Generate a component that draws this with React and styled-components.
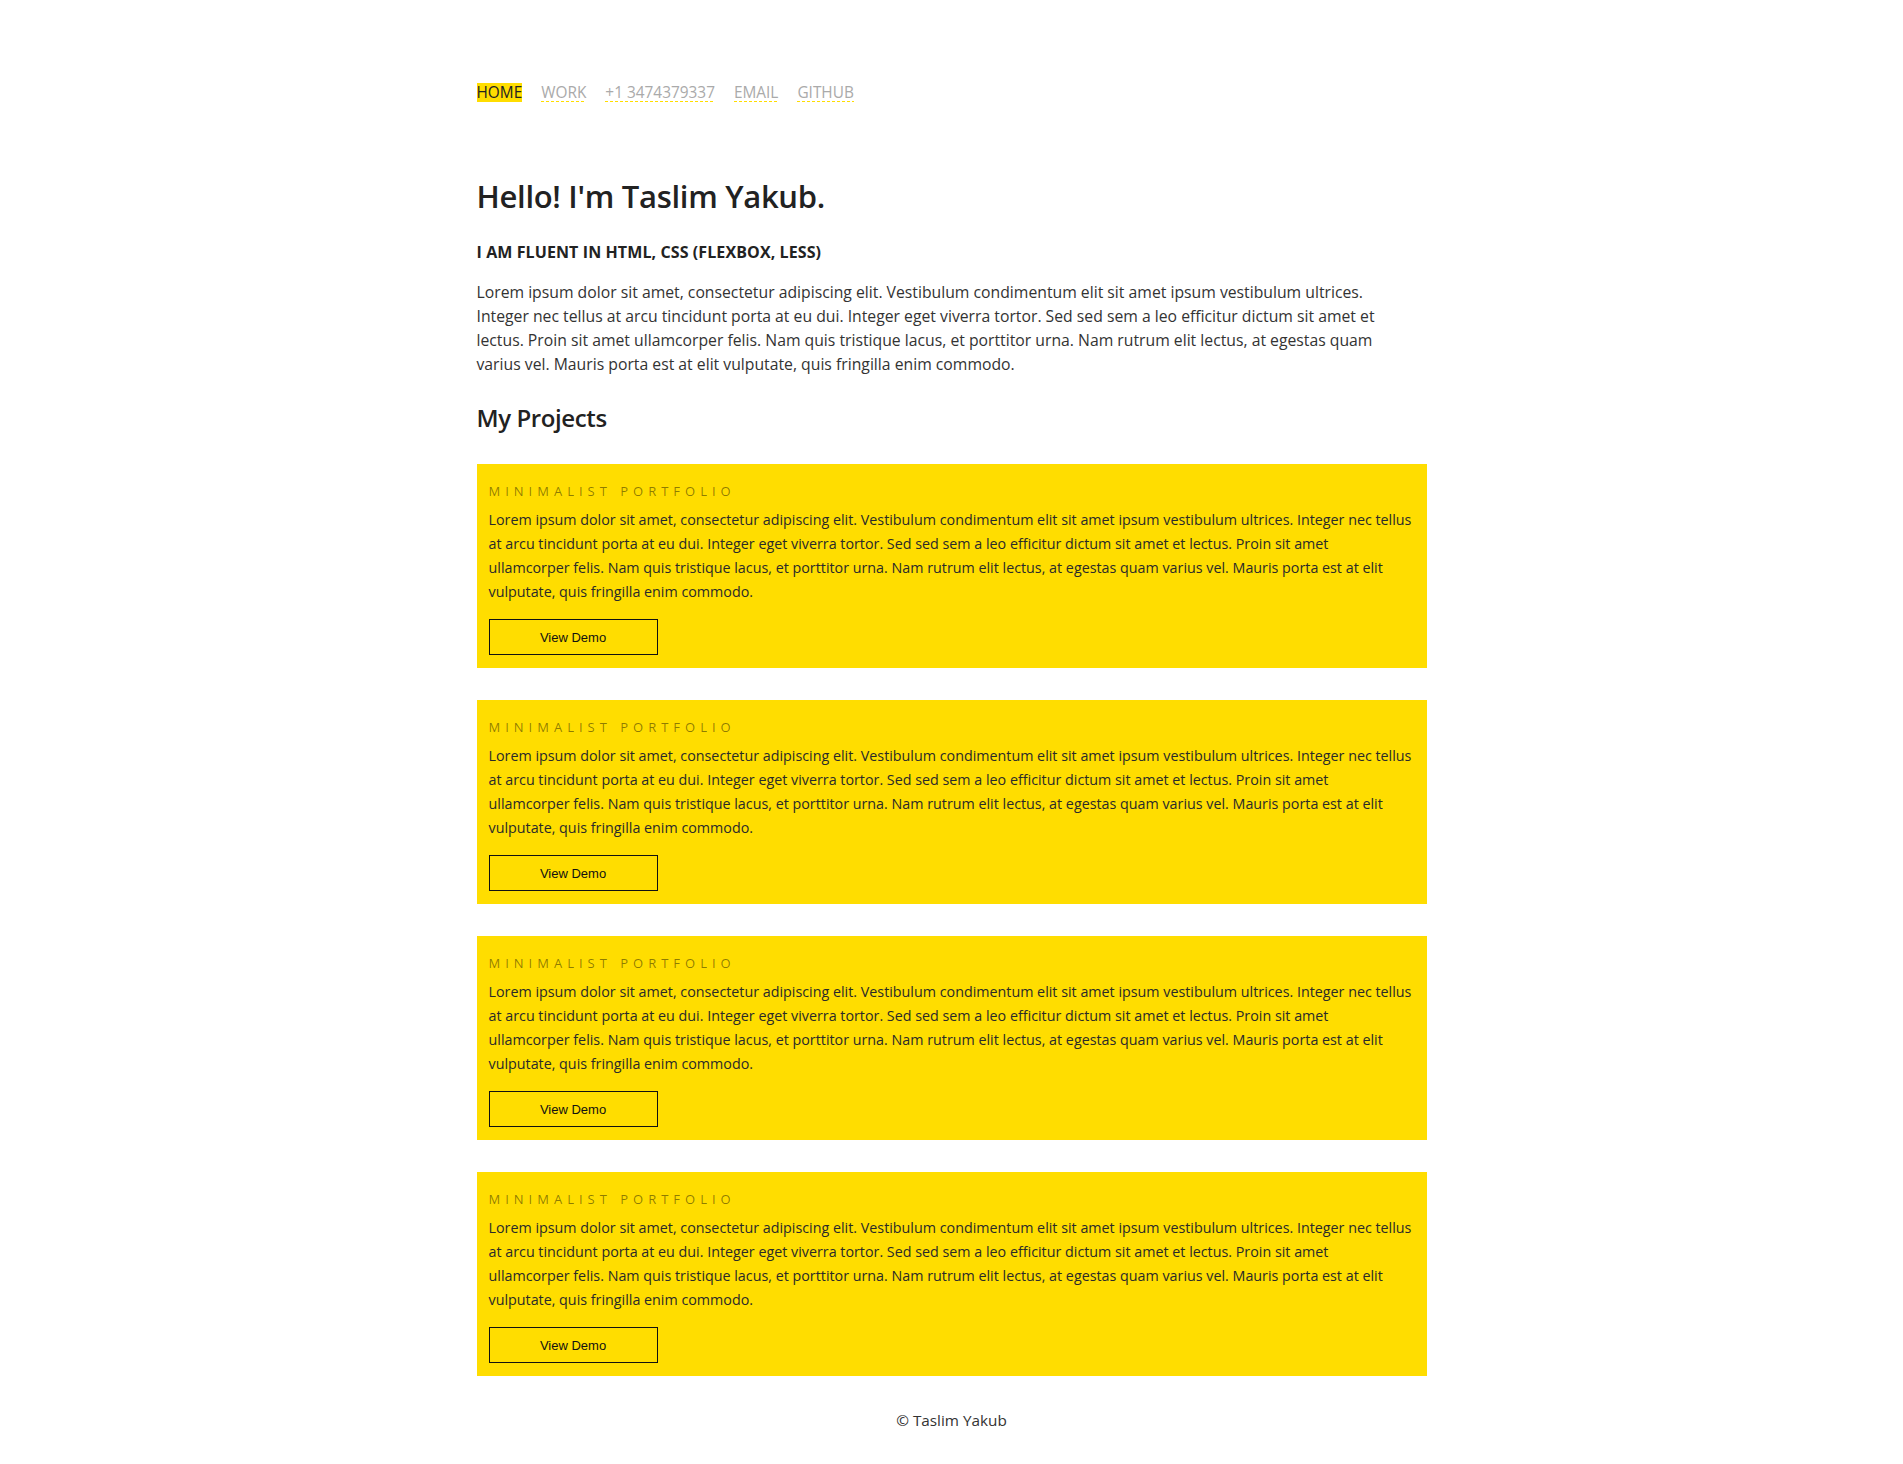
import React from 'react'
import styled, { createGlobalStyle } from 'styled-components'

const GlobalStyle = createGlobalStyle`
  body {
    margin: 0;
    background: #fff;
    font-family: "Open Sans", "Noto Sans", sans-serif;
    color: #333;
  }
`

const Page = styled.div`
  width: 950px;
  margin: 0 auto;
  padding: 83px 0 32px;
`

const Nav = styled.nav`
  display: flex;
  gap: 19px;
`

const NavLink = styled.a`
  display: inline-block;
  height: 19px;
  line-height: 19px;
  font-size: 15.4px;
  text-decoration: none;
  color: ${(p) => (p.$active ? '#222' : '#aaa')};
  background: ${(p) =>
    p.$active
      ? '#ffdd00'
      : 'repeating-linear-gradient(to right, #ffdd00 0 3px, transparent 3px 5px) left bottom / 100% 1px no-repeat'};
`

const Title = styled.h1`
  margin: 75.5px 0 0;
  font-size: 31px;
  line-height: 36px;
  font-weight: 600;
  letter-spacing: -0.3px;
  color: #222;
`

const Subtitle = styled.h4`
  margin: 28.8px 0 0;
  font-size: 16px;
  line-height: 20px;
  font-weight: 700;
  letter-spacing: 0.1px;
  color: #222;
`

const Intro = styled.p`
  max-width: 930px;
  margin: 17.4px 0 0;
  font-size: 15.75px;
  line-height: 24px;
  color: #333;
`

const SectionTitle = styled.h2`
  margin: 27.4px 0 0;
  font-size: 24px;
  line-height: 30px;
  font-weight: 600;
  letter-spacing: -0.4px;
  color: #222;
`

const Projects = styled.div`
  display: flex;
  flex-direction: column;
  gap: 32px;
  margin-top: 31px;
`

const Card = styled.article`
  background: #ffdd00;
  padding: 14px 12px 13px;
`

const CardTitle = styled.h3`
  margin: 0 0 3.5px;
  font-size: 13px;
  line-height: 26px;
  font-weight: 400;
  letter-spacing: 5px;
  color: rgba(0, 0, 0, 0.45);
`

const CardText = styled.p`
  margin: 0;
  font-size: 14.3px;
  line-height: 24px;
  color: #2a2a2a;
`

const DemoButton = styled.button`
  display: block;
  margin-top: 15.5px;
  width: 169px;
  height: 36px;
  padding: 0;
  border: 1px solid #111;
  background: transparent;
  font-family: "Liberation Sans", Arial, sans-serif;
  font-size: 13px;
  color: #111;
  cursor: pointer;
`

const Footer = styled.footer`
  margin-top: 32px;
  text-align: center;
  font-size: 15.3px;
  line-height: 24px;
  color: #333;
`

const lorem =
  'Lorem ipsum dolor sit amet, consectetur adipiscing elit. Vestibulum condimentum elit sit amet ipsum vestibulum ultrices. Integer nec tellus at arcu tincidunt porta at eu dui. Integer eget viverra tortor. Sed sed sem a leo efficitur dictum sit amet et lectus. Proin sit amet ullamcorper felis. Nam quis tristique lacus, et porttitor urna. Nam rutrum elit lectus, at egestas quam varius vel. Mauris porta est at elit vulputate, quis fringilla enim commodo.'

// keeps the card copy wrapping where the original font wraps it
const cardLorem = lorem.replace('ullamcorper felis.', 'ullamcorper\u00a0felis.')

const links = [
  { label: 'HOME', active: true },
  { label: 'WORK' },
  { label: '+1 3474379337' },
  { label: 'EMAIL' },
  { label: 'GITHUB' },
]

const projects = [1, 2, 3, 4]

export default function App() {
  return (
    <>
      <GlobalStyle />
      <Page>
        <Nav>
          {links.map((l) => (
            <NavLink key={l.label} href="#" $active={l.active}>
              {l.label}
            </NavLink>
          ))}
        </Nav>

        <Title>Hello! I'm Taslim Yakub.</Title>
        <Subtitle>I AM FLUENT IN HTML, CSS (FLEXBOX, LESS)</Subtitle>
        <Intro>{lorem}</Intro>

        <SectionTitle>My Projects</SectionTitle>
        <Projects>
          {projects.map((id) => (
            <Card key={id}>
              <CardTitle>MINIMALIST PORTFOLIO</CardTitle>
              <CardText>{cardLorem}</CardText>
              <DemoButton>View Demo</DemoButton>
            </Card>
          ))}
        </Projects>

        <Footer>© Taslim Yakub</Footer>
      </Page>
    </>
  )
}
